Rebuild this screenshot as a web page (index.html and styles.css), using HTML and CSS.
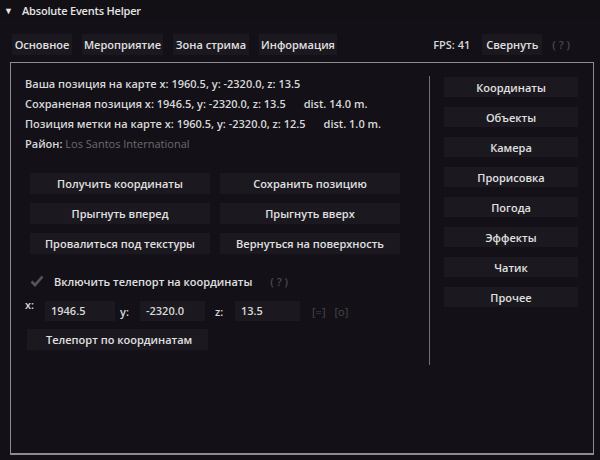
FILE: index.html
```html
<!DOCTYPE html>
<html>
<head>
<meta charset="utf-8">
<link rel="stylesheet" href="styles.css">
</head>
<body>
<div class="window">
  <div class="titlebar">
    <span class="tri">&#9660;</span>
    <span class="title">Absolute Events Helper</span>
  </div>
  <div class="tabs">
    <div class="btn tab t1">Основное</div>
    <div class="btn tab t2">Мероприятие</div>
    <div class="btn tab t3">Зона стрима</div>
    <div class="btn tab t4">Информация</div>
    <div class="spacer"></div>
    <div class="fps">FPS: 41</div>
    <div class="btn tab">Свернуть</div>
    <div class="help">( ? )</div>
  </div>
  <div class="frame">
    <div class="left">
      <div class="line">Ваша позиция на карте x: 1960.5, y: -2320.0, z: 13.5</div>
      <div class="line">Сохраненая позиция x: 1946.5, y: -2320.0, z: 13.5<span class="gap"></span>dist. 14.0 m.</div>
      <div class="line">Позиция метки на карте x: 1960.5, y: -2320.0, z: 12.5<span class="gap"></span>dist. 1.0 m.</div>
      <div class="line">Район: <span class="muted">Los Santos International</span></div>
      <div class="grid">
        <div class="btn gbtn">Получить координаты</div>
        <div class="btn gbtn">Сохранить позицию</div>
        <div class="btn gbtn">Прыгнуть вперед</div>
        <div class="btn gbtn">Прыгнуть вверх</div>
        <div class="btn gbtn">Провалиться под текстуры</div>
        <div class="btn gbtn">Вернуться на поверхность</div>
      </div>
      <div class="check">
        <svg class="tick" width="14" height="12" viewBox="0 0 14 12"><path d="M1.5 6.5 L5 10 L12.5 1.5" fill="none" stroke="#57555b" stroke-width="2.6"/></svg>
        <span class="checklabel">Включить телепорт на координаты</span>
        <span class="help small">( ? )</span>
      </div>
      <div class="inputs">
        <span class="lbl lx">x:</span>
        <div class="inp w70">1946.5</div>
        <span class="lbl">y:</span>
        <div class="inp w65 m10">-2320.0</div>
        <span class="lbl">z:</span>
        <div class="inp w65">13.5</div>
        <span class="dim d1">[=]</span>
        <span class="dim d2">[o]</span>
      </div>
      <div class="btn tpbtn">Телепорт по координатам</div>
    </div>
    <div class="sep"></div>
    <div class="right">
      <div class="btn rbtn">Координаты</div>
      <div class="btn rbtn">Объекты</div>
      <div class="btn rbtn">Камера</div>
      <div class="btn rbtn">Прорисовка</div>
      <div class="btn rbtn">Погода</div>
      <div class="btn rbtn">Эффекты</div>
      <div class="btn rbtn">Чатик</div>
      <div class="btn rbtn">Прочее</div>
    </div>
  </div>
</div>
</body>
</html>
```
FILE: styles.css
```css
html, body {
  margin: 0;
  padding: 0;
  background: #110f15;
}
body {
  width: 600px;
  height: 460px;
  overflow: hidden;
  font-family: "Open Sans", "Liberation Sans", sans-serif;
  font-weight: 600;
  font-size: 11px;
  color: #d8d8d8;
}
.window {
  width: 600px;
  height: 460px;
  background: #131117;
  display: flex;
  flex-direction: column;
}
.titlebar {
  height: 20px;
  display: flex;
  align-items: center;
  padding-left: 4px;
  background: #121015;
}
.tri {
  font-size: 9px;
  color: #e8e8e8;
  width: 18px;
  text-align: left;
}
.title {
  font-size: 11px;
  letter-spacing: -0.2px;
  color: #e4e4e4;
}
.tabs {
  display: flex;
  align-items: center;
  height: 21px;
  margin-top: 14px;
  padding-left: 12px;
  gap: 10px;
}
.btn {
  background: #1b191f;
  color: #e0e0e0;
  display: flex;
  align-items: center;
  justify-content: center;
  height: 20px;
  white-space: nowrap;
}
.tab {
  height: 21px;
  padding: 0 4px;
}
.t1 { width: 60px; padding: 0; }
.t2 { width: 81px; padding: 0; }
.t3 { width: 76px; padding: 0; }
.t4 { width: 78px; padding: 0; }
.spacer {
  flex: 1;
}
.fps {
  margin-right: 2px;
}
.help {
  color: #4a484e;
  margin-left: 0;
  margin-right: 30px;
}
.help.small {
  margin: 0 0 0 18px;
}
.frame {
  margin: 7px 6px 0 10px;
  height: 390px;
  border: 1px solid #8d8d90;
  border-bottom-width: 2px;
  display: flex;
  background: #131117;
}
.left {
  width: 418px;
  padding: 11px 0 0 14px;
  box-sizing: border-box;
}
.line {
  height: 20px;
  line-height: 20px;
  white-space: nowrap;
}
.gap {
  display: inline-block;
  width: 18px;
}
.muted {
  color: #6c6b70;
  font-weight: 400;
}
.grid {
  display: grid;
  grid-template-columns: 180px 180px;
  column-gap: 10px;
  row-gap: 9px;
  margin: 19px 0 0 5px;
}
.gbtn {
  height: 21px;
}
.check {
  display: flex;
  align-items: center;
  height: 20px;
  margin: 17px 0 0 5px;
}
.tick {
  margin-right: 10px;
}
.checklabel {
  color: #e0e0e0;
}
.inputs {
  display: flex;
  align-items: center;
  height: 20px;
  margin-top: 10px;
}
.lbl {
  width: 20px;
  text-align: left;
}
.lx {
  align-self: flex-start;
  margin-top: -4px;
}
.inp {
  background: #1b191f;
  height: 20px;
  line-height: 20px;
  padding-left: 6px;
  box-sizing: border-box;
  margin-right: 5px;
}
.m10 { margin-right: 10px; }
.w70 { width: 70px; }
.w65 { width: 65px; }
.dim {
  color: #4a484e;
  font-weight: 400;
}
.d1 {
  margin-left: 7px;
}
.d2 {
  margin-left: 9px;
}
.tpbtn {
  width: 181px;
  height: 21px;
  margin: 8px 0 0 2px;
  justify-content: flex-start;
  padding-left: 19px;
  box-sizing: border-box;
}
.sep {
  width: 1px;
  background: #707073;
  margin-top: 13px;
  height: 289px;
}
.right {
  display: flex;
  flex-direction: column;
  gap: 10px;
  padding: 14px 0 0 14px;
}
.rbtn {
  width: 134px;
}
```
